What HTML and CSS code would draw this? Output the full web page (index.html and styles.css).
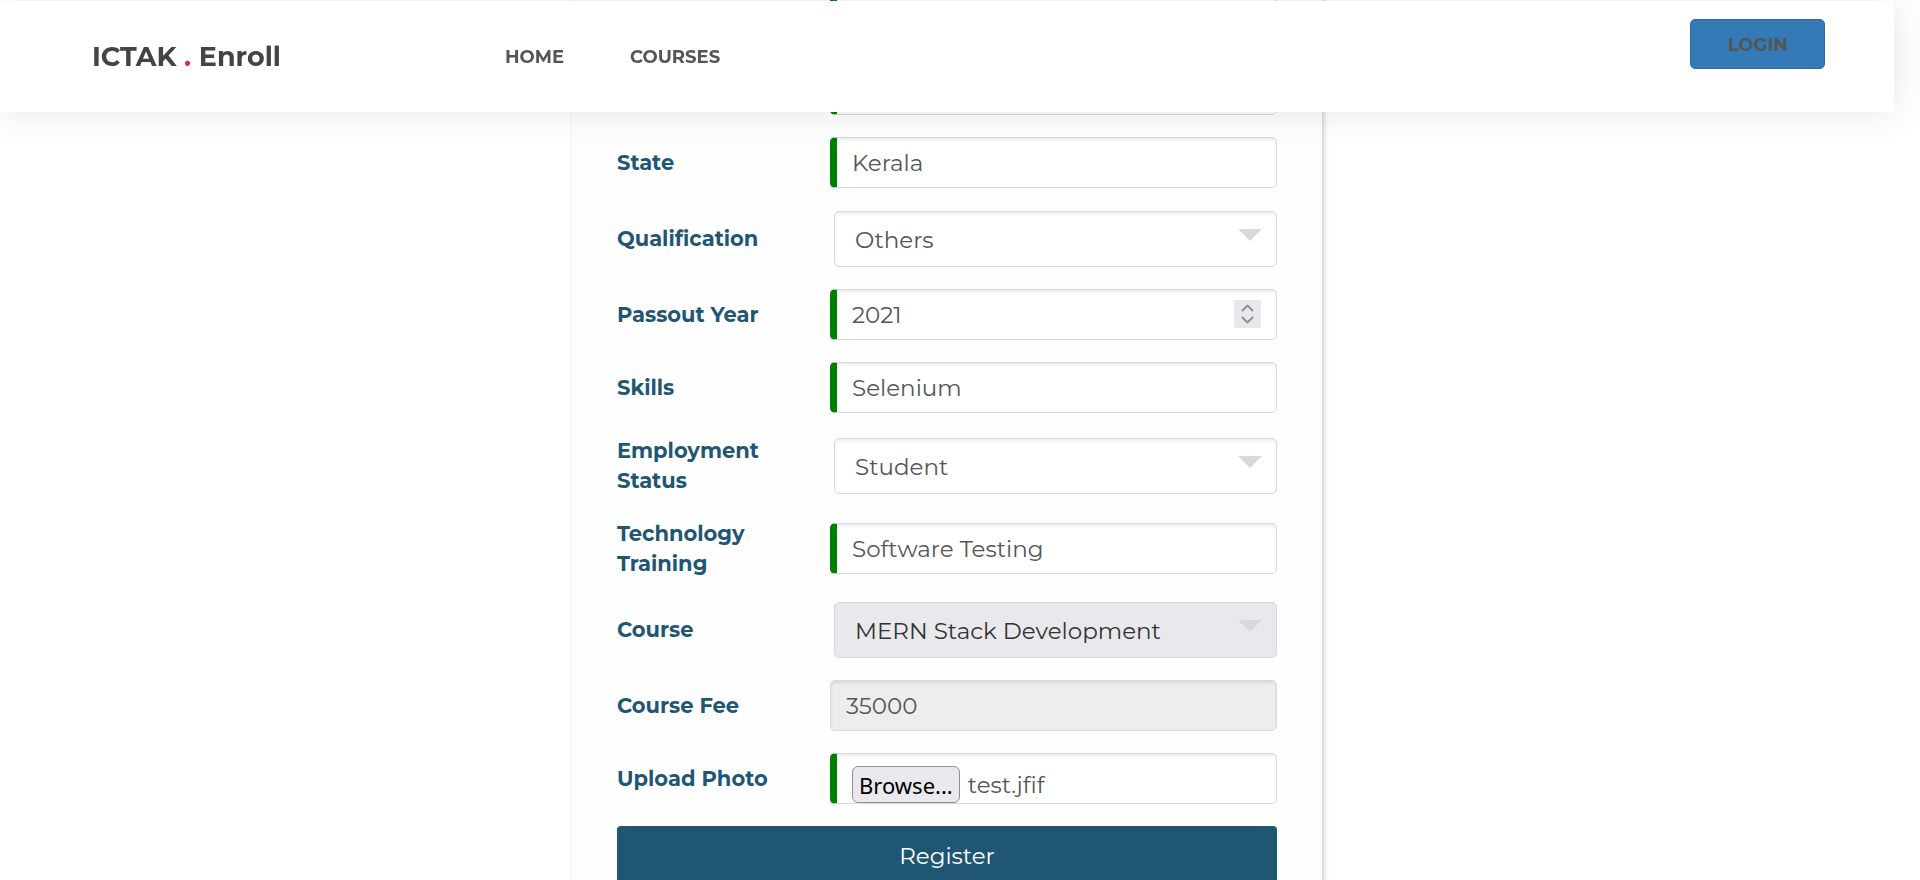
FILE: index.html
```html
<!DOCTYPE html>
<html lang="en">
<head>
<meta charset="utf-8">
<title>ICTAK . Enroll</title>
<link rel="stylesheet" href="styles.css">
</head>
<body>
<header class="site-header">
  <a class="logo" href="#">ICTAK <span class="logo-dot">.</span> Enroll</a>
  <nav class="nav">
    <a href="#">HOME</a>
    <a href="#">COURSES</a>
  </nav>
  <button class="login" type="button">LOGIN</button>
</header>
<main class="page">
  <form class="card">
    <div class="row">
      <span></span>
      <input class="field valid" type="text" aria-label="Address">
    </div>
    <div class="row">
      <span></span>
      <input class="field valid" type="text" aria-label="District">
    </div>
    <div class="row">
      <label for="state">State</label>
      <input class="field valid" id="state" type="text" value="Kerala">
    </div>
    <div class="row">
      <label for="qualification">Qualification</label>
      <div class="select-wrap">
        <select class="field" id="qualification"><option>Others</option></select>
      </div>
    </div>
    <div class="row">
      <label for="year">Passout Year</label>
      <div class="number-wrap">
        <input class="field valid" id="year" type="number" value="2021">
        <svg class="spinner" viewBox="0 0 27 28" aria-hidden="true"><path d="M8.500 10.500l5-5 5 5M8.500 17.500l5 5 5-5"/></svg>
      </div>
    </div>
    <div class="row">
      <label for="skills">Skills</label>
      <input class="field valid" id="skills" type="text" value="Selenium">
    </div>
    <div class="row">
      <label for="employment">Employment Status</label>
      <div class="select-wrap">
        <select class="field" id="employment"><option>Student</option></select>
      </div>
    </div>
    <div class="row">
      <label for="training">Technology Training</label>
      <input class="field valid" id="training" type="text" value="Software Testing">
    </div>
    <div class="row">
      <label for="course">Course</label>
      <div class="select-wrap">
        <select class="field active" id="course"><option>MERN Stack Development</option></select>
      </div>
    </div>
    <div class="row">
      <label for="fee">Course Fee</label>
      <input class="field readonly" id="fee" type="text" value="35000" readonly>
    </div>
    <div class="row">
      <label for="photo">Upload Photo</label>
      <div class="field valid file">
        <button class="browse" id="photo" type="button">Browse...</button>
        <span>test.jfif</span>
      </div>
    </div>
    <button class="register" type="submit">Register</button>
  </form>
</main>
</body>
</html>
```

FILE: styles.css
```css
* {
  box-sizing: border-box;
}

body {
  margin: 0;
  background: #fff;
  color: #555;
  font-family: Montserrat, Inter, sans-serif;
  font-size: 22px;
}

.site-header {
  position: fixed;
  z-index: 10;
  top: 1px;
  left: 0;
  right: 26px;
  display: flex;
  align-items: center;
  height: 111px;
  padding: 0 69px 0 92px;
  background: #fff;
  box-shadow: 0 0 36px rgba(0, 0, 0, 0.1);
}

.logo {
  width: 413px;
  color: #444;
  font-size: 27px;
  font-weight: 700;
  text-decoration: none;
}

.logo-dot {
  color: #dc2f38;
}

.nav {
  display: flex;
  flex: 1;
  gap: 66px;
}

.nav a {
  color: #555;
  font-size: 18px;
  font-weight: 700;
  text-decoration: none;
}

.login {
  align-self: flex-start;
  width: 135px;
  height: 50px;
  margin-top: 18px;
  padding-top: 2px;
  border: 1px solid #2e6da4;
  border-radius: 5px;
  background: #337ab7;
  color: #555;
  font: inherit;
  font-size: 18px;
  font-weight: 700;
}

.page {
  height: 100vh;
  padding-right: 26px;
  overflow: hidden;
}

.card {
  display: flex;
  flex-direction: column;
  gap: 22px;
  max-width: 750px;
  margin: -32px auto 0;
  padding: 23px 45px 45px;
  background: #fefefe;
  box-shadow: 2px 2px 5px rgba(0, 0, 0, 0.2);
}

.row {
  display: grid;
  grid-template-columns: 213px 1fr;
  align-items: center;
}

.row label {
  max-width: 160px;
  padding-top: 1px;
  color: #1f5673;
  font-size: 21px;
  font-weight: 700;
  line-height: 30px;
}

.field {
  display: block;
  width: 100%;
  height: 51px;
  margin: 0;
  padding: 0 15px;
  border: 1px solid #d5dbd9;
  border-radius: 5px;
  outline: 0;
  background: #fff;
  box-shadow: inset 0 2px 3px rgba(0, 0, 0, 0.08);
  color: #555;
  font: inherit;
  font-size: 23px;
}

.valid {
  border-left: 7px solid #008000;
}

.readonly {
  background: #ededed;
}

.select-wrap {
  position: relative;
  padding: 1px 0 0 4px;
}

.select-wrap .field {
  height: 56px;
  padding: 2px 20px 0;
  appearance: none;
}

.select-wrap .active {
  background: #e9e9ed;
  box-shadow: none;
  color: #333;
}

.select-wrap::after {
  content: "";
  position: absolute;
  top: 19px;
  right: 15px;
  border: 12px solid transparent;
  border-top-color: #d5dbd9;
  border-bottom-width: 0;
  pointer-events: none;
}

.number-wrap {
  position: relative;
}

.number-wrap .field {
  appearance: textfield;
}

.number-wrap .field::-webkit-inner-spin-button {
  appearance: none;
}

.spinner {
  position: absolute;
  top: 11px;
  right: 16px;
  width: 27px;
  height: 28px;
  background: #e9e9ed;
  fill: none;
  stroke: #8f8f9d;
  stroke-width: 2;
  stroke-linecap: round;
  stroke-linejoin: round;
}

.file {
  display: flex;
  align-items: flex-end;
  gap: 8px;
  line-height: 36px;
}

.browse {
  height: 37px;
  padding: 0 6px;
  border: 1px solid #8f8f9d;
  border-radius: 6px;
  background: #e9e9ed;
  color: #000;
  font-family: "Noto Sans", sans-serif;
  font-size: 22px;
  line-height: 30px;
}

.register {
  height: 60px;
  border: 0;
  border-radius: 4px;
  background: #1f5673;
  color: #fff;
  font: inherit;
  font-size: 23px;
}
```
